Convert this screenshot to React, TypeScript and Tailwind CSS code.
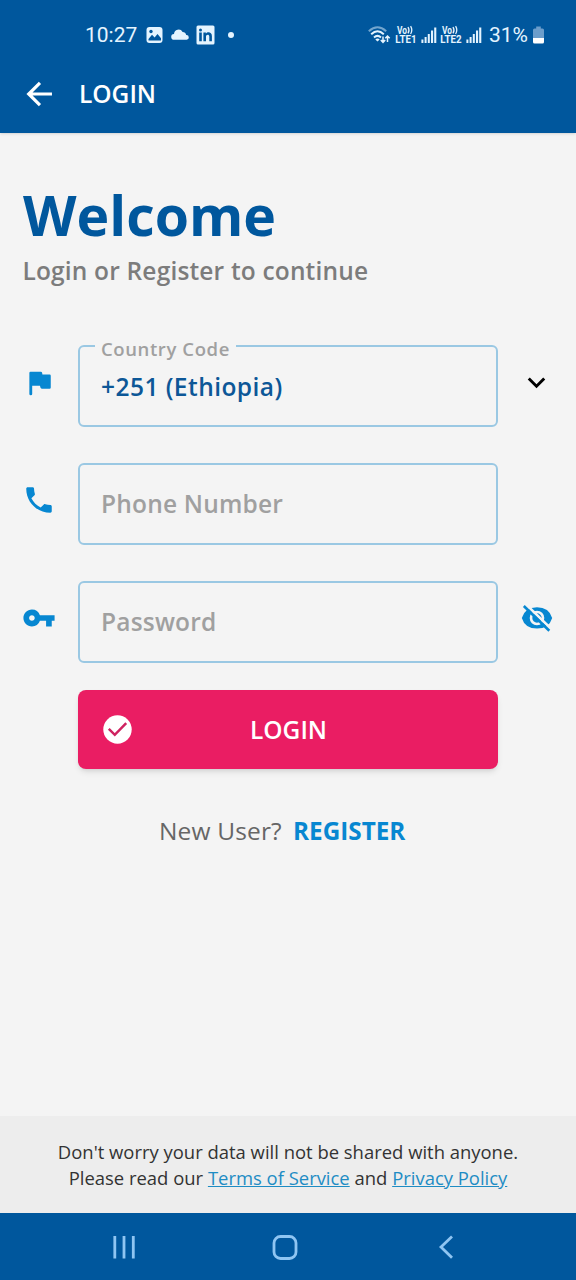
import React from 'react';
import { MdPhone, MdVpnKey } from 'react-icons/md';

function VoLte({ slot }: { slot: string }) {
  return (
    <svg className="h-[20px] w-[22px] overflow-visible font-[Roboto,sans-serif]" viewBox="0 0 22 20" fill="currentColor">
      <text x="2" y="8.6" fontSize="10" fontWeight="700" textLength="10" lengthAdjust="spacingAndGlyphs">Vo</text>
      <path d="M13 2q2 3.3 0 6.4M15.6 1.2q2.4 4 0 7.8" fill="none" stroke="currentColor" strokeWidth="1.3" />
      <text x="0.3" y="17.5" fontSize="10.2" fontWeight="700" textLength="21.3" lengthAdjust="spacingAndGlyphs">LTE{slot}</text>
    </svg>
  );
}

function Signal() {
  return (
    <svg className="h-[17px] w-4" viewBox="0 0 16 17" fill="currentColor">
      <rect x="0.4" y="12.5" width="2" height="3.5" />
      <rect x="3.6" y="10" width="2" height="6" />
      <rect x="6.8" y="7" width="2" height="9" />
      <rect x="10" y="3.5" width="2.1" height="12.5" />
      <rect x="13.2" y="0.5" width="2.1" height="15.5" />
    </svg>
  );
}

function StatusBar() {
  return (
    <div className="flex h-[56px] items-center pt-[14px] pl-[85px] font-[Roboto,sans-serif] text-[21px] text-[#e4f4ff]">
      <span className="mt-[2px] w-[61px]">10:27</span>
      <svg className="h-[18px] w-[17px]" viewBox="0 0 17 18">
        <rect x="0.5" y="1" width="16" height="16" rx="3" fill="currentColor" />
        <path d="M2.5 13 6 8.8 8.6 11.5 11.5 8 15 12.2V14.5H2.5Z" fill="#00579d" />
        <circle cx="5" cy="5.5" r="1.7" fill="#00579d" />
      </svg>
      <svg className="ml-[8px] h-[14px] w-[18px]" viewBox="0 0 18 14" fill="currentColor">
        <path d="M3.2 11.8A2.9 2.9 0 0 1 3 6 4.6 4.6 0 0 1 11.6 4 3.8 3.8 0 0 1 15.2 7 2.4 2.4 0 0 1 15.6 11.8Z" />
      </svg>
      <svg className="ml-[7px] h-5 w-[19px]" viewBox="0 0 19 20">
        <rect x="0.5" y="0.5" width="18" height="19" rx="1.5" fill="currentColor" />
        <g fill="#00579d">
          <circle cx="4.5" cy="5" r="1.5" />
          <path d="M3.2 7.5h2.6v8.7H3.2zM7.4 7.5h2.5v1.2c1.5-2.4 6-1.9 6 2.3v5.2h-2.6v-4.6c0-2.7-3.3-2.4-3.3 0v4.6H7.4z" />
        </g>
      </svg>
      <span className="ml-[13px] size-[6px] rounded-full bg-[#e4f4ff]" />
      <svg className="ml-[134px] h-[18px] w-[23px]" viewBox="0 0 23 18" fill="none" stroke="currentColor" strokeWidth="2">
        <path d="M.8 5.2Q9.5-2.6 18.2 5.2" opacity=".5" />
        <path d="M3.2 8.2Q9.5 2.4 15.8 8.2M6 11.4Q9.5 8.4 13 11.4" />
        <path d="M7.3 13.4Q9.5 11.8 11.7 13.4L9.5 15.6Z" fill="currentColor" stroke="none" />
        <path d="M15 10.5v6M12.8 14 15 16.4l2.2-2.4M19.5 16V10M17.3 12.3l2.2-2.3 2.2 2.3" strokeWidth="1.5" />
      </svg>
      <div className="ml-[4px] flex items-center">
        <VoLte slot="1" />
        <span className="ml-[4px] flex"><Signal /></span>
        <span className="ml-[3px] flex"><VoLte slot="2" /></span>
        <span className="ml-[4px] flex"><Signal /></span>
      </div>
      <span className="mt-[2px] ml-[7px] w-[42px] text-[21px] whitespace-nowrap">31%</span>
      <svg className="ml-[2px] h-[18px] w-[11px]" viewBox="0 0 11 18">
        <path d="M3.2 0.5h4.6v2H9.5Q11 2.5 11 4v8H0V4Q0 2.5 1.5 2.5H3.2Z" fill="#6b9dcb" />
        <path d="M0 12h11v4Q11 17.5 9.5 17.5h-8Q0 17.5 0 16Z" fill="#fff" />
      </svg>
    </div>
  );
}

function Outline({ label, children }: { label?: string; children: React.ReactNode }) {
  return (
    <fieldset
      className={
        label
          ? 'h-[91px] w-[420px] rounded-[6px] border-2 border-[#9ac8e3] pl-[15px]'
          : 'h-[82px] w-[420px] rounded-[6px] border-2 border-[#9ac8e3] pl-[15px]'
      }
    >
      {label && (
        <legend className="h-[20px] pr-[6px] pl-[6px] text-[18.5px] leading-[25px] font-semibold tracking-[0.6px] text-[#a0a0a0]">{label}</legend>
      )}
      <div className={label ? 'pt-[14px] pl-[6px] text-[24.5px] leading-[34px] font-semibold tracking-[0.45px] text-[#0c5797]' : 'flex h-full items-center pt-px pl-[6px] text-[24.5px] font-semibold tracking-[0.2px] text-[#a0a0a0]'}>
        {children}
      </div>
    </fieldset>
  );
}

export default function App() {
  return (
    <div className="flex h-[1280px] w-[576px] flex-col overflow-hidden bg-[#f4f4f4] font-['Open_Sans','Noto_Sans',sans-serif]">
      <header className="h-[133px] shrink-0 bg-[#00579d] text-white shadow-sm">
        <StatusBar />
        <div className="flex h-[77px] items-center pl-[20px]">
          <svg className="mb-[2px] h-[38px] w-[38px]" viewBox="0 0 24 24" fill="none" stroke="currentColor" strokeWidth="2">
            <path d="M20.2 12H5.5M12.6 5 5.5 12l7.1 7" />
          </svg>
          <h1 className="ml-[21px] text-[24.5px] font-semibold">LOGIN</h1>
        </div>
      </header>
      <main className="grow">
        <h2 className="mt-[49px] ml-[23px] text-[55.4px] leading-[66px] font-bold text-[#00579d]">Welcome</h2>
        <p className="mt-[6px] ml-[22.5px] text-[24.5px] leading-[34px] font-semibold tracking-[0.17px] text-[#7c7c7c]">Login or Register to continue</p>
        <div className="mt-[48px] flex items-start">
          <svg className="mt-[30px] mr-[17px] ml-[22px] size-[34px] shrink-0" viewBox="0 0 24 24" fill="#0787d1">
            <path d="M6 4H13.3Q14 4 14.2 4.7L14.4 6H19.5Q20.3 6 20.3 6.9V15.1Q20.3 16 19.5 16H14Q13.2 16 13 15.2L12.7 14H7.2V19.8Q7.2 20.7 6.2 20.7T5.2 19.8V4.9Q5.2 4 6 4Z" />
          </svg>
          <span className="ml-[5px] flex shrink-0"><Outline label="Country Code">+251 (Ethiopia)</Outline></span>
          <svg className="mt-[29px] ml-[21px] size-[35px]" viewBox="0 0 24 24" fill="#000"><path d="M7.41 8.58 12 13.17l4.59-4.59L18 10l-6 6-6-6z" /></svg>
        </div>
        <div className="mt-[36px] flex items-start">
          <MdPhone className="mt-[20px] mr-[17px] ml-[22px] size-[34px] text-[#0787d1]" />
          <span className="ml-[5px] flex"><Outline>Phone Number</Outline></span>
        </div>
        <div className="mt-[36px] flex items-start">
          <MdVpnKey className="mt-[20px] mr-[17px] ml-[22px] size-[34px] text-[#0787d1]" />
          <span className="ml-[5px] flex"><Outline>Password</Outline></span>
          <svg className="mt-[20px] ml-[22px] size-[34px]" viewBox="0 0 34 34" fill="none">
            <path d="M1.8 17Q5 6.2 17 6.2T32.2 17Q29 27.6 17 27.6T1.8 17Z" fill="#0787d1" />
            <circle cx="17" cy="17" r="6" stroke="#f4f4f4" strokeWidth="2.6" />
            <path d="M5.8 3.2 31.8 28.5" stroke="#f4f4f4" strokeWidth="2.6" />
            <path d="M3.8 5 29.3 29.8" stroke="#0787d1" strokeWidth="2.6" />
          </svg>
        </div>
        <button className="mt-[27px] ml-[78px] flex h-[79px] w-[420px] items-center rounded-[8px] bg-[#ea1d63] pl-[25px] text-white shadow-md">
          <svg className="size-[29px]" viewBox="0 0 29 29"><circle cx="14.5" cy="14.5" r="14.2" fill="#fff" /><path d="m5.8 13.8 6 6L23.2 8.2" fill="none" stroke="#cf2260" strokeWidth="2.5" /></svg>
          <span className="mt-px ml-[118px] text-[24.5px] font-semibold">LOGIN</span>
        </button>
        <div className="mt-[44px] ml-[159px] flex text-[24.5px] leading-[36px] text-[#666]">
          <span className="w-[134px] tracking-[0.15px]">New User?</span>
          <span className="text-[24.3px] font-bold text-[#0787d1]">REGISTER</span>
        </div>
      </main>
      <footer className="h-[97px] shrink-0 bg-[#ededed] pt-[23px] text-center text-[18.45px] leading-[26px] text-[#333]">
        <p>Don't worry your data will not be shared with anyone.</p>
        <p>Please read our <a className="text-[#1e8cc4] underline">Terms of Service</a> and <a className="text-[#1e8cc4] underline">Privacy Policy</a></p>
      </footer>
      <nav className="h-[67px] shrink-0 bg-[#00579d]">
        <svg className="h-[67px] w-[576px]" viewBox="0 0 576 67" fill="none" stroke="#8fc5f2" strokeWidth="2.8">
          <path d="M114.8 23v22.5M124 23v22.5M133.3 23v22.5" />
          <rect x="274" y="23.5" width="22" height="22" rx="6.5" />
          <path d="M452 23.5 441 34l11 10.8" />
        </svg>
      </nav>
    </div>
  );
}
